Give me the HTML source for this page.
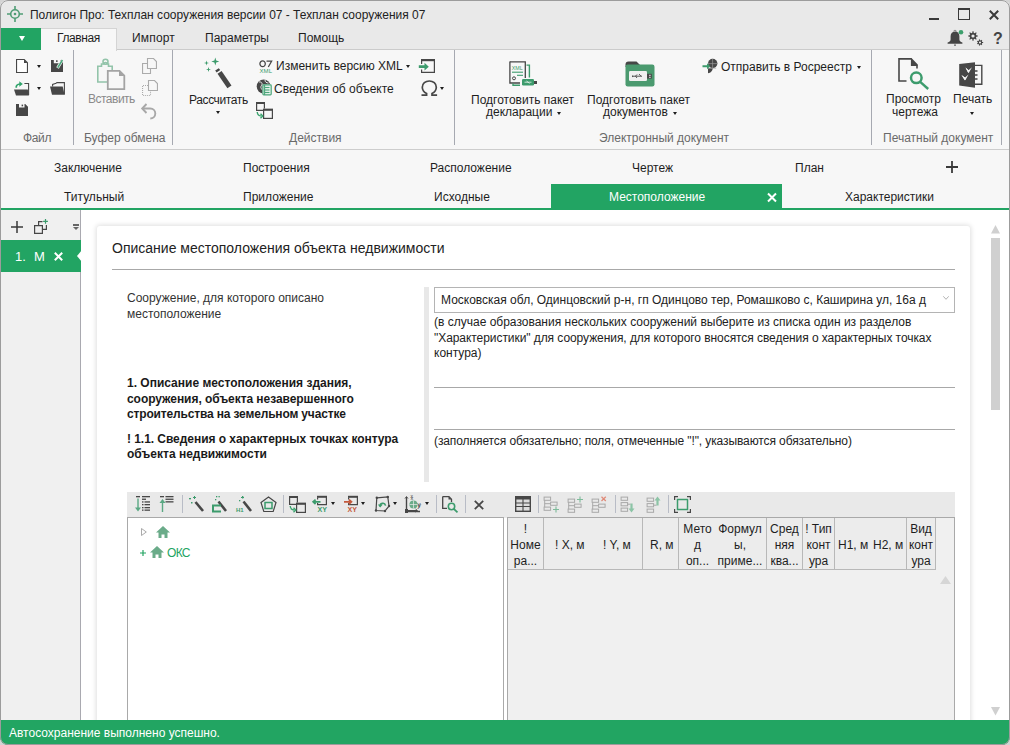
<!DOCTYPE html>
<html><head><meta charset="utf-8">
<style>
*{margin:0;padding:0;box-sizing:border-box}
html,body{width:1010px;height:745px;overflow:hidden;background:#d4d4d4}
body{font-family:"Liberation Sans",sans-serif;font-size:12px;color:#1e1e1e;position:relative}
.a{position:absolute}
.t{position:absolute;white-space:nowrap;line-height:15px;font-size:12px}
svg{position:absolute;overflow:visible}
#win{position:absolute;left:0;top:0;width:1010px;height:745px;border-radius:8px;overflow:hidden;background:#fff}
#frame{position:absolute;left:0;top:0;width:1010px;height:745px;border:1px solid #9c9c9c;border-radius:8px;pointer-events:none}
#title{left:0;top:0;width:1010px;height:28px;background:#e9e9e9}
#tabrow{left:0;top:28px;width:1010px;height:22px;background:#e9e9e9;border-bottom:1px solid #cbcbcb}
#ribbon{left:0;top:50px;width:1010px;height:100px;background:#f7f7f7;border-bottom:1px solid #cdcdcd}
#doctabs{left:0;top:150px;width:1010px;height:58px;background:#f7f7f7}
#gline{left:0;top:208px;width:1010px;height:2px;background:#22a463}
#left{left:0;top:210px;width:81px;height:510px;background:#f0f0f0;border-right:1px solid #a9a9b0}
#status{left:0;top:720px;width:1010px;height:25px;background:#22a562}
.sep{position:absolute;width:1px;background:#a6a9b1}
.gl{color:#6a6a6a}
.hd{white-space:nowrap;font-size:12px;color:#1e1e1e}
.dd{position:absolute;width:0;height:0;border-left:2.5px solid transparent;border-right:2.5px solid transparent;border-top:3px solid #1e1e1e}
.card{left:97px;top:226px;width:873px;height:520px;background:#fff;border-radius:3px;box-shadow:0 0 5px 1px rgba(0,0,0,0.13)}
</style></head><body>
<div id="win">
<div id="title" class="a"></div>
<div id="tabrow" class="a"></div>
<div id="ribbon" class="a"></div>
<div id="doctabs" class="a"></div>
<div id="gline" class="a"></div>
<div id="left" class="a"></div>
<!-- TITLE BAR -->
<svg style="left:7px;top:6px" width="16" height="16" viewBox="0 0 16 16"><g fill="none" stroke="#4f9c74" stroke-width="1.6"><circle cx="8" cy="8" r="4.3"/><line x1="8" y1="0" x2="8" y2="3.7"/><line x1="8" y1="12.3" x2="8" y2="16"/><line x1="0" y1="8" x2="3.7" y2="8"/><line x1="12.3" y1="8" x2="16" y2="8"/></g><circle cx="8" cy="8" r="1.3" fill="#4f9c74"/></svg>
<div class="t" style="left:30px;top:7px;color:#222;font-size:13px;transform:scaleX(0.921);transform-origin:0 0">Полигон Про: Техплан сооружения версии 07 - Техплан сооружения 07</div>
<div class="a" style="left:929px;top:18px;width:10px;height:2px;background:#3a3a3a"></div>
<div class="a" style="left:958px;top:8px;width:12px;height:12px;border:1.3px solid #3a3a3a;border-top-width:2px"></div>
<svg style="left:989px;top:10px" width="10" height="10" viewBox="0 0 10 10"><path d="M0.8 0.8L9.2 9.2M9.2 0.8L0.8 9.2" stroke="#3a3a3a" stroke-width="2"/></svg>
<!-- TAB ROW -->
<div class="a" style="left:1px;top:28px;width:40px;height:22px;background:#22a463"></div>
<div class="a" style="left:19px;top:36px;width:0;height:0;border-left:3.5px solid transparent;border-right:3.5px solid transparent;border-top:5px solid #fff"></div>
<div class="a" style="left:41px;top:28px;width:76px;height:23px;background:#f7f7f7;border:1px solid #d4d4d4;border-left:none;border-bottom:none"></div>
<div class="t" style="left:57px;top:31px;letter-spacing:-0.39px">Главная</div>
<div class="t" style="left:132px;top:31px;letter-spacing:0.17px">Импорт</div>
<div class="t" style="left:205px;top:31px">Параметры</div>
<div class="t" style="left:298px;top:31px">Помощь</div>
<!-- bell -->
<svg style="left:947px;top:29px" width="17" height="17" viewBox="0 0 17 17"><path d="M8 2.6C5 2.6 3.6 4.8 3.6 7.6V10.6C3.6 12 2.6 13 0.6 13.4V14.8H15.4V13.4C13.4 13 12.4 12 12.4 10.6V7.6C12.4 4.8 11 2.6 8 2.6Z" fill="#454545"/><rect x="7" y="15.6" width="2" height="1" fill="#454545"/><path d="M6.6 2.4a1.4 1.1 0 0 1 2.8 0" fill="none" stroke="#777" stroke-width="0.8"/><circle cx="14" cy="3.2" r="2.3" fill="#3c9f6c"/></svg>
<!-- gears -->
<svg style="left:968px;top:30.5px" width="16" height="16" viewBox="0 0 16 16"><path fill-rule="evenodd" fill="#444" d="M8.33 4.34 L9.77 4.44 L9.77 5.56 L8.33 5.66 L7.83 6.89 L8.77 7.97 L7.97 8.77 L6.89 7.83 L5.66 8.33 L5.56 9.77 L4.44 9.77 L4.34 8.33 L3.11 7.83 L2.03 8.77 L1.23 7.97 L2.17 6.89 L1.67 5.66 L0.23 5.56 L0.23 4.44 L1.67 4.34 L2.17 3.11 L1.23 2.03 L2.03 1.23 L3.11 2.17 L4.34 1.67 L4.44 0.23 L5.56 0.23 L5.66 1.67 L6.89 2.17 L7.97 1.23 L8.77 2.03 L7.83 3.11Z M6.60 5.00 A1.6 1.6 0 1 0 3.40 5.00 A1.6 1.6 0 1 0 6.60 5.00Z"/><path fill-rule="evenodd" fill="#444" d="M14.24 10.99 L15.17 11.07 L15.17 11.93 L14.24 12.01 L13.80 12.93 L14.31 13.71 L13.64 14.25 L13.00 13.57 L12.00 13.80 L11.71 14.69 L10.88 14.50 L11.00 13.57 L10.20 12.93 L9.33 13.26 L8.96 12.49 L9.76 12.01 L9.76 10.99 L8.96 10.51 L9.33 9.74 L10.20 10.07 L11.00 9.43 L10.88 8.50 L11.71 8.31 L12.00 9.20 L13.00 9.43 L13.64 8.75 L14.31 9.29 L13.80 10.07Z M13.10 11.50 A1.1 1.1 0 1 0 10.90 11.50 A1.1 1.1 0 1 0 13.10 11.50Z"/></svg>
<div class="a" style="left:993px;top:29px;font-size:16px;line-height:20px;color:#444;font-weight:bold">?</div>
<!-- RIBBON -->
<div class="sep" style="left:73px;top:50px;height:95px"></div>
<div class="sep" style="left:172px;top:50px;height:95px"></div>
<div class="sep" style="left:454px;top:50px;height:95px"></div>
<div class="sep" style="left:871px;top:50px;height:95px"></div>
<div class="sep" style="left:1001px;top:50px;height:95px"></div>
<div class="t gl" style="left:23px;top:131px;letter-spacing:-0.37px">Файл</div>
<div class="t gl" style="left:84px;top:131px">Буфер обмена</div>
<div class="t gl" style="left:289px;top:131px">Действия</div>
<div class="t gl" style="left:599px;top:131px">Электронный документ</div>
<div class="t gl" style="left:883px;top:131px">Печатный документ</div>
<!-- file group -->
<svg style="left:16px;top:59px" width="12" height="14" viewBox="0 0 12 14"><path d="M0.55 0.55H8.2L11.45 3.8V13.45H0.55Z" fill="#fff" stroke="#474747" stroke-width="1.1"/><path d="M8 0.6V4H11.4Z" fill="#474747"/></svg>
<div class="dd" style="left:37px;top:65px;border-left-width:2.6px;border-right-width:2.6px;border-top-width:3px"></div>
<svg style="left:51px;top:59px" width="13" height="14" viewBox="0 0 13 14"><path d="M0 1H2.8V4.2H9V1H12V13H0Z" fill="#474747"/><rect x="5" y="1.3" width="1.6" height="1.6" fill="#474747"/><path d="M6.5 9L11.5 0.8" stroke="#f7f7f7" stroke-width="3"/><path d="M6.8 8.6L11.4 1" stroke="#4aa57a" stroke-width="1.6"/></svg>
<svg style="left:14px;top:81px" width="16" height="15" viewBox="0 0 16 15"><path d="M10.4 2.5H14.6V14" fill="none" stroke="#474747" stroke-width="1.1"/><path d="M0 8.5H13.8L14.9 14.6H2Z" fill="#474747"/><path d="M2.4 6.8C1.8 5 3 3 6.2 3" fill="none" stroke="#2fa36a" stroke-width="1.7"/><path d="M5.3 0.3L8.8 3.1L5.3 5.7Z" fill="#2fa36a"/></svg>
<div class="dd" style="left:37px;top:87px;border-left-width:2.6px;border-right-width:2.6px;border-top-width:3px"></div>
<svg style="left:50px;top:82px" width="15" height="13" viewBox="0 0 15 13"><path d="M2.6 4.6V2.4L6 1.3L7 0.6H14.4V12.4" fill="none" stroke="#474747" stroke-width="1.1"/><path d="M0 4.5H12.7L14.6 12.8H2Z" fill="#474747"/></svg>
<svg style="left:16px;top:104px" width="12" height="12" viewBox="0 0 12 12"><path d="M0 0H3V3.5H8.5V0H9.2L12 2.8V12H0Z" fill="#474747"/><rect x="5.6" y="0.6" width="1.5" height="1.7" fill="#474747"/></svg>
<!-- clipboard group -->
<svg style="left:97px;top:58px" width="29" height="33" viewBox="0 0 29 33"><path d="M0.8 8.2H4.5V6H7a1.5 1.5 0 0 1 3 0V6H11.5V8.2H15.2V24H0.8Z" fill="none" stroke="#93c4aa" stroke-width="1.6"/><circle cx="8.5" cy="3.7" r="2.5" fill="none" stroke="#93c4aa" stroke-width="1.6"/><path d="M10.8 12.8H22.5L27.3 17.6V31.2H10.8Z" fill="#f7f7f7" stroke="#a4a4a4" stroke-width="1.8"/><path d="M22 12.8V18H27.3Z" fill="#a4a4a4"/></svg>
<div class="t" style="left:88px;top:92px;color:#8a8a8a;letter-spacing:-0.5px">Вставить</div>
<svg style="left:142px;top:58px" width="15" height="17" viewBox="0 0 15 17"><path d="M5.5 0.55H11.5L14.45 3.5V10.45H5.5Z" fill="#f7f7f7" stroke="#ababab" stroke-width="1.1"/><path d="M5.5 5.5H0.55V15.45H8.5V10.5" fill="none" stroke="#ababab" stroke-width="1.1"/></svg>
<svg style="left:142px;top:80px" width="16" height="17" viewBox="0 0 16 17"><path d="M6.5 0.55H12.5L15.45 3.5V10.45H6.5Z" fill="#f7f7f7" stroke="#ababab" stroke-width="1.1"/><path d="M6 5.5H0.55V15.45H8.5V11" fill="none" stroke="#ababab" stroke-width="1.1" stroke-dasharray="1 1"/></svg>
<svg style="left:141px;top:102px" width="16" height="17" viewBox="0 0 16 17"><path d="M2 6.5H9.3a5 5 0 0 1 0 10" fill="none" stroke="#a8a8a8" stroke-width="1.9"/><path d="M5.5 2L1.2 6.5L5.5 11" fill="none" stroke="#a8a8a8" stroke-width="1.9"/></svg>
<!-- actions -->
<svg style="left:203px;top:57px" width="30" height="33" viewBox="0 0 30 33"><g fill="#3c9b6c"><path d="M12.3 0.5L13.2 3.6L16.3 4.5L13.2 5.4L12.3 8.5L11.4 5.4L8.3 4.5L11.4 3.6Z"/><path d="M3.5 3.5L4.1 5.4L6 6L4.1 6.6L3.5 8.5L2.9 6.6L1 6L2.9 5.4Z"/><path d="M5.5 10L6.1 11.9L8 12.5L6.1 13.1L5.5 15L4.9 13.1L3 12.5L4.9 11.9Z"/></g><path d="M12.2 13.5L15.8 11.2L17.2 13.1L13.6 15.4Z" fill="#474747"/><path d="M14.5 16.8L18.6 14L28.5 28.5L24.4 31.3Z" fill="#474747"/></svg>
<div class="t" style="left:189px;top:93px;letter-spacing:-0.38px">Рассчитать</div>
<div class="dd" style="left:216px;top:111px"></div>
<svg style="left:259px;top:60px" width="14" height="14" viewBox="0 0 14 14"><ellipse cx="3.6" cy="3.8" rx="2.7" ry="2.9" fill="none" stroke="#474747" stroke-width="1.3"/><path d="M7.5 1.2H12.6L9.3 7" fill="none" stroke="#474747" stroke-width="1.3"/><text x="0.6" y="13" font-family="Liberation Sans" font-size="5.6" fill="#3c9b6c" textLength="12.4" lengthAdjust="spacingAndGlyphs">XML</text></svg>
<div class="t" style="left:276px;top:59px">Изменить версию XML</div>
<div class="dd" style="left:406px;top:65px"></div>
<svg style="left:418px;top:58px" width="18" height="16" viewBox="0 0 18 16"><path d="M3.6 3V6M3.6 11.5V14.4H16.4V1.5" fill="none" stroke="#474747" stroke-width="1.2"/><rect x="3" y="1" width="14" height="2.2" fill="#474747"/><path d="M0.8 7.3H6.5V4.8L10.8 8.7L6.5 12.6V10.1H0.8Z" fill="#3c9b6c"/></svg>
<svg style="left:256px;top:79px" width="17" height="17" viewBox="0 0 17 17"><circle cx="7.6" cy="7.5" r="6.9" fill="#474747"/><path d="M3 3C5.5 2.5 7 4.5 5.5 6.5C4 8.5 5.5 10 7 11.5M9 1C9 3 10.5 4 12.5 4" stroke="#f7f7f7" stroke-width="0.9" fill="none"/><rect x="6.3" y="5.3" width="9.5" height="11.2" rx="1.2" fill="#f7f7f7"/><rect x="6.9" y="5.9" width="8.3" height="10" rx="0.8" fill="#e6f3ec" stroke="#4aa57a" stroke-width="1.2"/><g stroke="#4aa57a" stroke-width="1.1"><line x1="9" y1="8.5" x2="13.5" y2="8.5"/><line x1="9" y1="11" x2="13.5" y2="11"/><line x1="9" y1="13.5" x2="13.5" y2="13.5"/><line x1="8.6" y1="6" x2="8.6" y2="16"/></g></svg>
<div class="t" style="left:274px;top:82px">Сведения об объекте</div>
<svg style="left:421px;top:80px" width="17" height="17" viewBox="0 0 17 17"><path d="M0.5 15.2H5.6V13.6C3 12.3 1.3 10 1.3 7.3C1.3 3.5 4.4 1 8.3 1S15.3 3.5 15.3 7.3C15.3 10 13.6 12.3 11 13.6V15.2H16.1" fill="none" stroke="#474747" stroke-width="1.7"/></svg>
<div class="dd" style="left:440px;top:87px;border-left-width:2.6px;border-right-width:2.6px;border-top-width:3px"></div>
<svg style="left:256px;top:102px" width="17" height="17" viewBox="0 0 17 17"><path d="M0.6 1V8.4H7" fill="none" stroke="#474747" stroke-width="1.2"/><path d="M8.4 1V6.5" fill="none" stroke="#474747" stroke-width="1.2"/><rect x="0" y="0" width="9" height="2" fill="#474747"/><rect x="7.6" y="7.4" width="8.8" height="9" fill="none" stroke="#474747" stroke-width="1.2"/><rect x="7" y="6.8" width="10" height="2" fill="#474747"/><path d="M1.2 10C1.5 13.3 3 14 5.5 14" fill="none" stroke="#3aa36e" stroke-width="1.4"/><path d="M4.5 11.8L6.8 14L4.5 16.2" fill="none" stroke="#3aa36e" stroke-width="1.4"/></svg>
<!-- electronic doc -->
<svg style="left:508px;top:60px" width="31" height="28" viewBox="0 0 31 28"><path d="M1.9 1.9H17.3V18" fill="none" stroke="#474747" stroke-width="1.3"/><path d="M1.9 1.6V23H12" fill="none" stroke="#474747" stroke-width="1.3"/><path d="M18.5 5.1H21.4V17.5" fill="none" stroke="#3c9b6c" stroke-width="1.4"/><path d="M5 23.5V25.3H12" fill="none" stroke="#3c9b6c" stroke-width="1.4"/><text x="3.8" y="9.6" font-family="Liberation Sans" font-size="5.2" fill="#3c9b6c" textLength="11" lengthAdjust="spacingAndGlyphs">XML</text><g stroke="#3c9b6c" stroke-width="1.1"><line x1="4" y1="12.2" x2="15" y2="12.2"/><line x1="9" y1="15.3" x2="15" y2="15.3"/></g><circle cx="6" cy="18.3" r="1.5" fill="none" stroke="#474747" stroke-width="1"/><rect x="14" y="19" width="12" height="6.5" rx="1.2" fill="#3c9b6c"/><rect x="26" y="21" width="3" height="3" fill="#474747"/><path d="M16.5 22.2H23.5M18.5 21L20 22.2L21.5 23.4" fill="none" stroke="#e8f4ee" stroke-width="0.8"/></svg>
<div class="t" style="left:471px;top:93px">Подготовить пакет</div>
<div class="t" style="left:486px;top:105px">декларации</div>
<div class="dd" style="left:557px;top:112px"></div>
<svg style="left:625px;top:61px" width="30" height="26" viewBox="0 0 30 26"><path d="M0.5 3.5C0.5 1.5 1.5 0.5 3.5 0.5H11.5L14.5 3.5V6H0.5Z" fill="#474747"/><rect x="0.5" y="3.5" width="29" height="22" rx="2.2" fill="#4b9a6f"/><rect x="4" y="10" width="18" height="10" rx="1.3" fill="#f0f0f0"/><rect x="22" y="12.8" width="4.8" height="4.8" fill="#474747"/><rect x="24.2" y="13.8" width="1.4" height="1" fill="#fff"/><rect x="24.2" y="15.8" width="1.4" height="1" fill="#fff"/><path d="M7.5 15.2H17M12 13.5L10.5 15.2L12 17M14 13L16 15.2" fill="none" stroke="#474747" stroke-width="0.9"/><path d="M7 14.2L8.6 15.2L7 16.2Z" fill="#474747"/></svg>
<div class="t" style="left:587px;top:93px">Подготовить пакет</div>
<div class="t" style="left:603px;top:105px">документов</div>
<div class="dd" style="left:673px;top:112px"></div>
<svg style="left:702px;top:58px" width="17" height="17" viewBox="0 0 17 17"><circle cx="10.7" cy="5.5" r="4.7" fill="#474747"/><path d="M6 5.5V15.2C8.8 15 10.7 12.5 10.7 10.2H6Z" fill="#474747"/><path d="M10.6 0.8V10.2M6 5.6H15.4M6 10.1H14.2" stroke="#9a9a9a" stroke-width="0.7"/><path d="M0.5 7.2H5V5.2L8.2 8.2L5 11.2V9.2H0.5Z" fill="#3c9b6c"/></svg>
<div class="t" style="left:721px;top:60px">Отправить в Росреестр</div>
<div class="dd" style="left:857px;top:66px"></div>
<!-- print -->
<svg style="left:897px;top:57px" width="34" height="34" viewBox="0 0 34 34"><path d="M14.5 1.9H2V24H9.5" fill="none" stroke="#474747" stroke-width="1.6"/><path d="M20 11.5V8.5" fill="none" stroke="#474747" stroke-width="1.6"/><path d="M1.2 1.1H14.5L20.8 7.4V9H13.9V1.1Z" fill="#474747"/><path d="M14.6 2.5V8H20Z" fill="#474747"/><circle cx="19.3" cy="20.8" r="5.3" fill="none" stroke="#3d9c6d" stroke-width="2.5"/><path d="M23.2 24.8L31.2 32" stroke="#3d9c6d" stroke-width="2.4"/></svg>
<div class="t" style="left:886px;top:92px">Просмотр</div>
<div class="t" style="left:892px;top:105px">чертежа</div>
<svg style="left:959px;top:62px" width="25" height="26" viewBox="0 0 25 26"><path d="M0.2 2L16 0.2V25.8L0.2 23.6Z" fill="#474747"/><path d="M16 3.4H22.8V22.3H16" fill="none" stroke="#474747" stroke-width="1.4"/><g fill="#f7f7f7"><path d="M6.5 5.5L9.5 8.2L13 5.3L10 10.5L9.3 10.9Z"/><path d="M6.5 5.5L9.8 8.5L9.3 10.9Z"/><path d="M2.5 13L6 15.5L9.5 12.5L6.5 18L5.8 18.3Z"/><path d="M2.5 13L6.2 15.8L5.8 18.3Z"/></g><g stroke="#474747" stroke-width="1.5"><line x1="16" y1="9" x2="18.5" y2="9"/><line x1="16" y1="13" x2="18.5" y2="13"/><line x1="16" y1="17" x2="18.5" y2="17"/></g></svg>
<div class="t" style="left:953px;top:92px">Печать</div>
<div class="dd" style="left:970px;top:112px"></div>
<!-- DOC TABS -->
<div class="t" style="left:54px;top:161px">Заключение</div>
<div class="t" style="left:243px;top:161px">Построения</div>
<div class="t" style="left:430px;top:161px">Расположение</div>
<div class="t" style="left:632px;top:161px">Чертеж</div>
<div class="t" style="left:795px;top:161px">План</div>
<svg style="left:946px;top:161px" width="12" height="12" viewBox="0 0 12 12"><path d="M6 0V12M0 6H12" stroke="#3a3a3a" stroke-width="1.8"/></svg>
<div class="t" style="left:64px;top:190px">Титульный</div>
<div class="t" style="left:243px;top:190px">Приложение</div>
<div class="t" style="left:434px;top:190px">Исходные</div>
<div class="a" style="left:551px;top:184px;width:231px;height:24px;background:#22a463"></div>
<div class="t" style="left:609px;top:190px;color:#fff">Местоположение</div>
<svg style="left:767px;top:193px" width="10" height="9" viewBox="0 0 10 9"><path d="M1 0.5L9 8.5M9 0.5L1 8.5" stroke="#fff" stroke-width="2"/></svg>
<div class="t" style="left:845px;top:190px">Характеристики</div>
<!-- LEFT PANEL -->
<svg style="left:11px;top:221px" width="12" height="12" viewBox="0 0 12 12"><path d="M6 0V12M0 6H12" stroke="#3a3a3a" stroke-width="1.5"/></svg>
<svg style="left:34px;top:219px" width="15" height="16" viewBox="0 0 15 16"><path d="M0.6 6.6H8.4V14.4H0.6Z" fill="none" stroke="#474747" stroke-width="1.2"/><path d="M4.6 6.6V2.6H8.5M12.4 6V10.4H8.4" fill="none" stroke="#474747" stroke-width="1.2"/><path d="M11.5 0V4.8M9.1 2.4H13.9" stroke="#3c9b6c" stroke-width="1.2"/></svg>
<div class="a" style="left:73px;top:224px;width:6px;height:2px;background:#666"></div>
<div class="a" style="left:73px;top:226.5px;width:0;height:0;border-left:3px solid transparent;border-right:3px solid transparent;border-top:3.5px solid #666"></div>
<div class="a" style="left:1px;top:240px;width:80px;height:32px;background:#22a463"></div>
<div class="a" style="left:77px;top:250px;width:0;height:0;border-top:6px solid transparent;border-bottom:6px solid transparent;border-right:5px solid #fff"></div>
<div class="t" style="left:15px;top:249px;color:#fff;font-size:13px">1.</div>
<div class="t" style="left:34px;top:249px;color:#fff;font-size:13px">М</div>
<svg style="left:54px;top:252px" width="9" height="9" viewBox="0 0 9 9"><path d="M0.8 0.8L8.2 8.2M8.2 0.8L0.8 8.2" stroke="#fff" stroke-width="2"/></svg>
<!-- CONTENT -->
<div class="a card"></div>
<div class="t" style="left:112px;top:240px;font-size:14px;line-height:17px;color:#222">Описание местоположения объекта недвижимости</div>
<div class="a" style="left:112px;top:269px;width:843px;height:1px;background:#a8a8a8"></div>
<div class="t" style="left:127px;top:291px;color:#333">Сооружение, для которого описано</div>
<div class="t" style="left:127px;top:307px;color:#333">местоположение</div>
<div class="a" style="left:424px;top:287px;width:5px;height:195px;background:#e8e8e8"></div>
<div class="a" style="left:434px;top:287px;width:521px;height:26px;border:1px solid #b4b4b4;background:#fff"></div>
<div class="t" style="left:441px;top:293px;color:#222">Московская обл, Одинцовский р-н, гп Одинцово тер, Ромашково с, Каширина ул, 16а д</div>
<svg style="left:943px;top:296px" width="6" height="4" viewBox="0 0 6 4"><path d="M0.3 0.3L3 3.3L5.7 0.3" fill="none" stroke="#a0a0a0" stroke-width="0.8"/></svg>
<div class="t" style="left:434px;top:315px;color:#222">(в случае образования нескольких сооружений выберите из списка один из разделов</div>
<div class="t" style="left:434px;top:331px;color:#222;letter-spacing:-0.064px">"Характеристики" для сооружения, для которого вносятся сведения о характерных точках</div>
<div class="t" style="left:434px;top:346px;color:#222">контура)</div>
<div class="a" style="left:434px;top:387px;width:521px;height:1px;background:#a8a8a8"></div>
<div class="a" style="left:434px;top:429px;width:521px;height:1px;background:#a8a8a8"></div>
<div class="t" style="left:434px;top:434px;color:#222;letter-spacing:-0.1px">(заполняется обязательно; поля, отмеченные "!", указываются обязательно)</div>
<div class="t" style="left:127px;top:376px;font-weight:bold;color:#1a1a1a">1. Описание местоположения здания,</div>
<div class="t" style="left:127px;top:392px;font-weight:bold;color:#1a1a1a;letter-spacing:-0.06px">сооружения, объекта незавершенного</div>
<div class="t" style="left:127px;top:407px;font-weight:bold;color:#1a1a1a;letter-spacing:-0.16px">строительства на земельном участке</div>
<div class="t" style="left:127px;top:432px;font-weight:bold;color:#1a1a1a;letter-spacing:-0.05px">! 1.1. Сведения о характерных точках контура</div>
<div class="t" style="left:127px;top:447px;font-weight:bold;color:#1a1a1a">объекта недвижимости</div>
<!-- grid toolbar -->
<div class="a" style="left:127px;top:492px;width:828px;height:26px;background:#e9e9e9"></div>
<div class="a" style="left:127px;top:517px;width:377px;height:210px;background:#fff;border:1px solid #a9a9a9"></div>
<div class="a" style="left:507px;top:517px;width:448px;height:210px;background:#f0f0f0;border:1px solid #a9a9a9"></div>
<div class="a" style="left:508px;top:518px;width:427px;height:52px;background:#ececec;border-bottom:1px solid #b8b8b8"></div>
<!-- grid toolbar icons -->
<svg style="left:135px;top:495px" width="16" height="18" viewBox="0 0 16 18"><g fill="#474747"><rect x="1" y="1" width="4" height="1.3"/><rect x="7" y="1" width="8" height="1.3"/><rect x="7" y="3.6" width="4" height="1.3"/><rect x="7" y="6.3" width="1.5" height="1.3"/><rect x="9.5" y="6.3" width="5.5" height="1.3"/><rect x="7" y="9" width="1.5" height="1.3"/><rect x="9.5" y="9" width="5.5" height="1.3"/><rect x="7" y="12" width="1.5" height="1.3"/><rect x="9.5" y="12" width="5.5" height="1.3"/><rect x="7" y="14.5" width="1.5" height="1.3"/><rect x="9.5" y="14.5" width="5.5" height="1.3"/></g><path d="M3 3.5V14" stroke="#5aa883" stroke-width="1.4"/><path d="M0 12.5L3 16.5L6 12.5Z" fill="#5aa883"/></svg>
<svg style="left:159px;top:495px" width="16" height="18" viewBox="0 0 16 18"><g fill="#474747"><rect x="1" y="1" width="4" height="1.3"/><rect x="6.5" y="1" width="8" height="1.3"/><rect x="6.5" y="3.6" width="8" height="1.3"/><rect x="6.5" y="6.2" width="8" height="1.3"/></g><path d="M3.5 7V17" stroke="#5aa883" stroke-width="1.4"/><path d="M0.5 8L3.5 4L6.5 8Z" fill="#5aa883"/></svg>
<div class="a" style="left:182px;top:495px;width:1px;height:18px;background:#b8bcc6"></div>
<svg style="left:189px;top:496px" width="15" height="17" viewBox="0 0 15 17"><g fill="#3c9b6c"><rect x="5" y="0" width="1" height="3"/><rect x="4" y="1" width="3" height="1"/><rect x="0" y="2" width="2" height="1.3"/><rect x="2" y="6" width="1.5" height="1.5"/></g><path d="M6.5 6L14 15" stroke="#474747" stroke-width="2.6"/></svg>
<svg style="left:212px;top:496px" width="15" height="17" viewBox="0 0 15 17"><g fill="#3c9b6c"><rect x="4" y="0" width="1.3" height="1.3"/><rect x="6.5" y="0" width="1.3" height="1.3"/><rect x="3" y="3" width="1.3" height="1.3"/></g><path d="M6.5 5.5L14 15" stroke="#474747" stroke-width="2.6"/><path d="M9 9.5H1V15.5H9" fill="none" stroke="#3c9b6c" stroke-width="2"/></svg>
<svg style="left:236px;top:496px" width="16" height="17" viewBox="0 0 16 17"><g fill="#3c9b6c"><rect x="6" y="0" width="1.3" height="2.5"/><rect x="5" y="1" width="3" height="1"/><rect x="3" y="4" width="1.3" height="1.3"/></g><path d="M7.5 5.5L15 15" stroke="#474747" stroke-width="2.6"/><text x="0" y="16" font-family="Liberation Sans" font-size="6" font-weight="bold" fill="#3c9b6c">H1</text></svg>
<svg style="left:260px;top:496px" width="17" height="17" viewBox="0 0 17 17"><path d="M8.5 1L16 6.5L13.2 15.5H3.8L1 6.5Z" fill="none" stroke="#474747" stroke-width="1.2"/><path d="M5 6.5H12V12.5H5Z" fill="none" stroke="#3c9b6c" stroke-width="1.5"/></svg>
<div class="a" style="left:283px;top:495px;width:1px;height:18px;background:#b8bcc6"></div>
<svg style="left:289px;top:496px" width="17" height="17" viewBox="0 0 17 17"><path d="M0.6 1V8.4H7" fill="none" stroke="#474747" stroke-width="1.2"/><path d="M8.4 1V6.5" fill="none" stroke="#474747" stroke-width="1.2"/><rect x="0" y="0" width="9" height="2" fill="#474747"/><rect x="7.6" y="7.4" width="8.8" height="9" fill="none" stroke="#474747" stroke-width="1.2"/><rect x="7" y="6.8" width="10" height="2" fill="#474747"/><path d="M1.2 10C1.5 13.3 3 14 5.5 14" fill="none" stroke="#3aa36e" stroke-width="1.4"/><path d="M4.5 11.8L6.8 14L4.5 16.2" fill="none" stroke="#3aa36e" stroke-width="1.4"/></svg>
<svg style="left:312px;top:495px" width="17" height="18" viewBox="0 0 17 18"><path d="M5.6 8V9.6H14.4V1.5" fill="none" stroke="#474747" stroke-width="1.2"/><rect x="5" y="0.8" width="10" height="2" fill="#474747"/><path d="M5.6 2.5V4.5" stroke="#474747" stroke-width="1.2"/><path d="M1 6.8H8.5M3.6 4.6L1.2 6.8L3.6 9" fill="none" stroke="#3c9b6c" stroke-width="1.8"/><text x="5.6" y="17" font-family="Liberation Sans" font-size="6.8" font-weight="bold" fill="#3c9b6c" textLength="9.5" lengthAdjust="spacingAndGlyphs">XY</text></svg>
<div class="dd" style="left:331px;top:502px"></div>
<svg style="left:343px;top:495px" width="17" height="18" viewBox="0 0 17 18"><path d="M5.6 8V9.6H14.4V1.5" fill="none" stroke="#474747" stroke-width="1.2"/><rect x="5" y="0.8" width="10" height="2" fill="#474747"/><path d="M5.6 2.5V4.5" stroke="#474747" stroke-width="1.2"/><path d="M1 6.8H8.3M6 4.6L8.4 6.8L6 9" fill="none" stroke="#c4593c" stroke-width="1.8"/><text x="4.6" y="17" font-family="Liberation Sans" font-size="6.8" font-weight="bold" fill="#c4593c" textLength="9.5" lengthAdjust="spacingAndGlyphs">XY</text></svg>
<div class="dd" style="left:361px;top:502px"></div>
<svg style="left:375px;top:496px" width="17" height="17" viewBox="0 0 17 17"><path d="M1.8 1.8L12.8 1L14 10L10 15L1 14.5Z" fill="none" stroke="#474747" stroke-width="1.2"/><g fill="#474747"><circle cx="1.8" cy="1.8" r="1.2"/><circle cx="12.8" cy="1" r="1.2"/><circle cx="14" cy="10" r="1.2"/><circle cx="10" cy="15" r="1.2"/><circle cx="1" cy="14.5" r="1.2"/></g><path d="M5.2 10.5C4.6 7.2 9.6 5.8 10.6 9.6" fill="none" stroke="#3c9b6c" stroke-width="1.6"/><path d="M2.8 8.6L5.2 11.6L7.6 8.8Z" fill="#3c9b6c"/></svg>
<div class="dd" style="left:393px;top:502px"></div>
<svg style="left:405px;top:494px" width="19" height="19" viewBox="0 0 19 19"><path d="M1.5 3V16.5H12" fill="none" stroke="#474747" stroke-width="1.1"/><path d="M0 4.5L1.5 2.5L3 4.5" fill="none" stroke="#474747" stroke-width="0.9"/><path d="M10.5 15L12.5 16.5L10.5 18" fill="none" stroke="#474747" stroke-width="0.9"/><rect x="0" y="15" width="3" height="3" fill="#474747"/><text x="5.5" y="5.5" font-family="Liberation Sans" font-size="5.5" fill="#474747">x</text><text x="12.3" y="12.8" font-family="Liberation Sans" font-size="6.5" fill="#474747">y</text><circle cx="8.3" cy="10.5" r="3.6" fill="#6aab89"/><path d="M4.7 10.5H11.9M8.3 6.9V14.1M5.3 8.6H11.3M5.3 12.4H11.3" stroke="#d8ecdf" stroke-width="0.5"/></svg>

<svg style="left:405px;top:494px" width="19" height="19" viewBox="0 0 19 19"><path d="M1.5 4V17.5H15" fill="none" stroke="#474747" stroke-width="1.3"/><rect x="0" y="16" width="3" height="3" fill="#474747"/><text x="5.5" y="4" font-family="Liberation Sans" font-size="5" fill="#474747">x</text><text x="13" y="13" font-family="Liberation Sans" font-size="6" fill="#474747">y</text><circle cx="8.5" cy="10.5" r="4" fill="#6aab89"/><path d="M4.5 10.5H12.5M8.5 6.5V14.5" stroke="#e9e9e9" stroke-width="0.7"/></svg>
<div class="dd" style="left:425px;top:502px"></div>
<div class="a" style="left:436px;top:495px;width:1px;height:18px;background:#b8bcc6"></div>
<svg style="left:442px;top:496px" width="16" height="17" viewBox="0 0 16 17"><path d="M0.7 0.7H7L9.5 3.2V6" fill="none" stroke="#474747" stroke-width="1.3"/><path d="M0.7 0.5V12.3H5" fill="none" stroke="#474747" stroke-width="1.3"/><path d="M6.5 0.7V3.5H9.5Z" fill="#474747"/><circle cx="9.5" cy="10.5" r="3.2" fill="none" stroke="#3d9c6d" stroke-width="1.6"/><path d="M11.8 12.8L15.5 16.3" stroke="#3d9c6d" stroke-width="1.8"/></svg>
<div class="a" style="left:465px;top:495px;width:1px;height:18px;background:#b8bcc6"></div>
<svg style="left:474px;top:500px" width="10" height="10" viewBox="0 0 10 10"><path d="M0.8 0.8L9.2 9.2M9.2 0.8L0.8 9.2" stroke="#474747" stroke-width="1.8"/></svg>
<svg style="left:515px;top:496px" width="16" height="16" viewBox="0 0 16 16"><rect x="0.7" y="0.7" width="14.6" height="14.6" fill="#dcdcdc" stroke="#474747" stroke-width="1.4"/><rect x="0" y="0" width="16" height="3.5" fill="#474747"/><path d="M0 7H16M0 10.5H16M8 0V16" stroke="#474747" stroke-width="1.1"/></svg>
<div class="a" style="left:538px;top:495px;width:1px;height:18px;background:#b8bcc6"></div>
<svg style="left:543px;top:496px" width="17" height="17" viewBox="0 0 17 17"><g fill="none" stroke="#a8a8a8" stroke-width="1"><rect x="1.1" y="1.1" width="6.5" height="3.2"/><rect x="7.6" y="6.1" width="6.5" height="3.2"/><rect x="1.1" y="11.1" width="6.5" height="3.2"/><path d="M1.7 4.3V11.1M1.7 7.7H7.6"/></g><path d="M13 10.5V16.5M10 13.5H16" stroke="#7dbb9a" stroke-width="1.1"/></svg>
<svg style="left:567px;top:496px" width="17" height="17" viewBox="0 0 17 17"><g fill="none" stroke="#a8a8a8" stroke-width="1"><rect x="1.1" y="3.1" width="6.5" height="3.2"/><rect x="7.6" y="8.1" width="6.5" height="3.2"/><rect x="1.1" y="13.1" width="6.5" height="3.2"/><path d="M1.7 6.3V13.1M1.7 9.7H7.6"/></g><path d="M13 0.5V6.5M10 3.5H16" stroke="#7dbb9a" stroke-width="1.1"/></svg>
<svg style="left:591px;top:496px" width="17" height="17" viewBox="0 0 17 17"><g fill="none" stroke="#a8a8a8" stroke-width="1"><rect x="1.1" y="3.1" width="6.5" height="3.2"/><rect x="7.6" y="8.1" width="6.5" height="3.2"/><rect x="1.1" y="13.1" width="6.5" height="3.2"/><path d="M1.7 6.3V13.1M1.7 9.7H7.6"/></g><path d="M10.5 0.8L14.8 5M14.8 0.8L10.5 5" stroke="#e08a78" stroke-width="1.2"/></svg>
<div class="a" style="left:615px;top:495px;width:1px;height:18px;background:#b8bcc6"></div>
<svg style="left:620px;top:496px" width="15" height="17" viewBox="0 0 15 17"><g fill="none" stroke="#a8a8a8" stroke-width="1"><rect x="1.1" y="1.1" width="6.5" height="3.2"/><rect x="1.1" y="6.6" width="6.5" height="3.2"/><rect x="1.1" y="12.1" width="6.5" height="3.2"/><path d="M7.6 8.2H10.5"/></g><path d="M11.5 7.5V13" stroke="#8cc4a6" stroke-width="2.2"/><path d="M8.5 12.5L11.5 16.5L14.5 12.5Z" fill="#8cc4a6"/></svg>
<svg style="left:646px;top:496px" width="15" height="17" viewBox="0 0 15 17"><g fill="none" stroke="#a8a8a8" stroke-width="1"><rect x="1.1" y="2.1" width="6.5" height="3.2"/><rect x="1.1" y="7.6" width="6.5" height="3.2"/><rect x="1.1" y="13.1" width="6.5" height="3.2"/><path d="M7.6 9.2H10.5"/></g><path d="M11.5 4V9.5" stroke="#8cc4a6" stroke-width="2.2"/><path d="M8.5 4.5L11.5 0.5L14.5 4.5Z" fill="#8cc4a6"/></svg>
<div class="a" style="left:668px;top:495px;width:1px;height:18px;background:#b8bcc6"></div>
<svg style="left:674px;top:496px" width="17" height="17" viewBox="0 0 17 17"><path d="M0.6 4V0.6H4M13 0.6H16.4V4M16.4 13V16.4H13M4 16.4H0.6V13" fill="none" stroke="#474747" stroke-width="1.2"/><rect x="3.5" y="3.5" width="10" height="10" fill="none" stroke="#3d9c6d" stroke-width="1.5"/></svg>
<div class="a" style="left:543px;top:518px;width:1px;height:52px;background:#b8b8b8"></div>
<div class="a" style="left:642px;top:518px;width:1px;height:52px;background:#b8b8b8"></div>
<div class="a" style="left:678px;top:518px;width:1px;height:52px;background:#b8b8b8"></div>
<div class="a" style="left:766px;top:518px;width:1px;height:52px;background:#b8b8b8"></div>
<div class="a" style="left:802px;top:518px;width:1px;height:52px;background:#b8b8b8"></div>
<div class="a" style="left:834px;top:518px;width:1px;height:52px;background:#b8b8b8"></div>
<div class="a" style="left:906px;top:518px;width:1px;height:52px;background:#b8b8b8"></div>
<div class="a" style="left:935px;top:518px;width:1px;height:52px;background:#b8b8b8"></div>
<div class="hd a" style="left:508px;top:521px;width:35px;text-align:center;line-height:16px">!<br>Номе<br>ра...</div>
<div class="t" style="left:555px;top:538px">! X, м</div>
<div class="t" style="left:603px;top:538px">! Y, м</div>
<div class="t" style="left:650px;top:538px">R, м</div>
<div class="hd a" style="left:679px;top:521px;width:37px;text-align:center;line-height:16px">Мето<br>д<br>оп...</div>
<div class="hd a" style="left:714px;top:521px;width:52px;text-align:center;line-height:16px">Формул<br>ы,<br>приме...</div>
<div class="hd a" style="left:767px;top:521px;width:35px;text-align:center;line-height:16px">Сред<br>няя<br>ква...</div>
<div class="hd a" style="left:803px;top:521px;width:31px;text-align:center;line-height:16px">! Тип<br>конт<br>ура</div>
<div class="t" style="left:838px;top:538px">H1, м</div>
<div class="t" style="left:873px;top:538px">H2, м</div>
<div class="hd a" style="left:907px;top:521px;width:28px;text-align:center;line-height:16px">Вид<br>конт<br>ура</div>
<svg style="left:940px;top:576px" width="11" height="8" viewBox="0 0 11 8"><path d="M5.5 0L11 8H0Z" fill="#d6d6d6"/></svg>
<!-- tree -->
<svg style="left:141px;top:528px" width="6" height="8" viewBox="0 0 6 8"><path d="M0.5 0.5L5.3 4L0.5 7.5Z" fill="none" stroke="#a0a0a0" stroke-width="0.9"/></svg>
<svg style="left:156px;top:526px" width="14" height="12" viewBox="0 0 14 12"><path d="M7 0L14 6.5H11.5V12H8.5V8.5H5.5V12H2.5V6.5H0Z" fill="#6aab89"/></svg>
<svg style="left:140px;top:550px" width="6" height="6" viewBox="0 0 6 6"><path d="M3 0V6M0 3H6" stroke="#23a462" stroke-width="1.2"/></svg>
<svg style="left:150px;top:546px" width="14" height="12" viewBox="0 0 14 12"><path d="M7 0L14 6.5H11.5V12H8.5V8.5H5.5V12H2.5V6.5H0Z" fill="#6aab89"/></svg>
<div class="t" style="left:167px;top:546px;color:#23a462;letter-spacing:-0.7px">ОКС</div>
<!-- main scrollbar -->
<svg style="left:991px;top:225px" width="9" height="9" viewBox="0 0 9 9"><path d="M4.5 0L9 8.5H0Z" fill="#d0d0d0"/></svg>
<div class="a" style="left:991px;top:238px;width:9px;height:172px;background:#d0d0d0"></div>
<svg style="left:991px;top:707px" width="9" height="9" viewBox="0 0 9 9"><path d="M0 0H9L4.5 8.5Z" fill="#d0d0d0"/></svg>
<!-- STATUS -->
<div id="status" class="a"></div>
<div class="t" style="left:9px;top:726px;color:#fff">Автосохранение выполнено успешно.</div>
</div>
<div id="frame"></div>
</body></html>
